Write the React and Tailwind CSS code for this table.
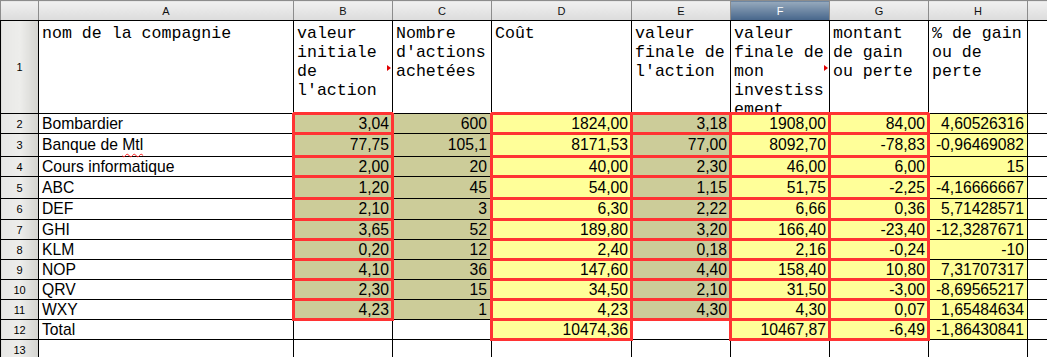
import React from "react";

const letters = ["A", "B", "C", "D", "E", "F", "G", "H", ""];

const heads = [
  "nom de la compagnie",
  "valeur initiale de l'action",
  "Nombre d'actions achetées",
  "Coût",
  "valeur finale de l'action",
  "valeur finale de mon investissement",
  "montant de gain ou perte",
  "% de gain ou de perte",
  "",
];

const rows = [
  ["Bombardier", "3,04", "600", "1824,00", "3,18", "1908,00", "84,00", "4,60526316"],
  ["Banque de Mtl", "77,75", "105,1", "8171,53", "77,00", "8092,70", "-78,83", "-0,96469082"],
  ["Cours informatique", "2,00", "20", "40,00", "2,30", "46,00", "6,00", "15"],
  ["ABC", "1,20", "45", "54,00", "1,15", "51,75", "-2,25", "-4,16666667"],
  ["DEF", "2,10", "3", "6,30", "2,22", "6,66", "0,36", "5,71428571"],
  ["GHI", "3,65", "52", "189,80", "3,20", "166,40", "-23,40", "-12,3287671"],
  ["KLM", "0,20", "12", "2,40", "0,18", "2,16", "-0,24", "-10"],
  ["NOP", "4,10", "36", "147,60", "4,40", "158,40", "10,80", "7,31707317"],
  ["QRV", "2,30", "15", "34,50", "2,10", "31,50", "-3,00", "-8,69565217"],
  ["WXY", "4,23", "1", "4,23", "4,30", "4,30", "0,07", "1,65484634"],
  ["Total", "", "", "10474,36", "", "10467,87", "-6,49", "-1,86430841"],
];

const heights = [
  "h-[20px]", "h-[23px]", "h-[20px]", "h-[22px]", "h-[21px]", "h-[20px]",
  "h-[20px]", "h-[20px]", "h-[20px]", "h-[20px]", "h-[20px]",
];

const widths = [
  "w-[255px]", "w-[99px]", "w-[99px]", "w-[140px]", "w-[99px]",
  "w-[99px]", "w-[99px]", "w-[99px]", "w-[100px]",
];

// which cells get the thick red outline
const isRed = (c, r) => {
  if (c === 1 || c === 4) return r <= 9;
  return c === 3 || c === 5 || c === 6;
};

const fill = (c, r) => {
  if ((c === 1 || c === 2 || c === 4) && r <= 9) return "bg-[#cccc99]";
  if (c === 3 || c === 5 || c === 6 || c === 7) return "bg-[#ffff99]";
  return "bg-white";
};

function Triangle() {
  return (
    <span className="absolute z-10 right-[1px] top-[44px] w-0 h-0 border-y-[3px] border-y-transparent border-l-[4px] border-l-[#e00000]" />
  );
}

function DataCell({ c, r, value }) {
  const border = isRed(c, r)
    ? "border-[3px] border-solid border-[#ff3333] pr-[2px]"
    : "border border-solid border-black pr-[3px]";
  const align = c === 0 ? "text-left pl-[3px]" : "text-right";
  return (
    <td className={`${border} ${fill(c, r)} ${align} align-middle whitespace-nowrap leading-[14px] p-0`}>
      {value === "Banque de Mtl" ? (
        <>
          Banque de{" "}
          <span className="underline decoration-wavy decoration-[#ff2020] decoration-1 underline-offset-[3px]">Mtl</span>
        </>
      ) : (
        value
      )}
    </td>
  );
}

export default function App() {
  return (
    <div className="w-[1047px] h-[357px] overflow-hidden bg-white">
      <table className="table-fixed border-collapse w-[1127px] font-['Liberation_Sans',Arial,sans-serif] text-[15.7px] text-black">
        <colgroup>
          <col className="w-[38px]" />
          {widths.map((w, i) => (
            <col key={i} className={w} />
          ))}
        </colgroup>
        <tbody>
          {/* column letters */}
          <tr className="h-[20px]">
            <td className="border border-solid border-[#8c8c8c] border-b-black bg-linear-to-b from-[#f0f0f0] to-[#dcdcdc]" />
            {letters.map((l, i) =>
              l === "F" ? (
                <td
                  key={i}
                  className="border border-solid border-[#8c8c8c] border-b-black bg-linear-to-b from-[#97aabd] to-[#46658a] text-white text-center text-[11px] leading-[16px]"
                >
                  {l}
                </td>
              ) : (
                <td
                  key={i}
                  className="border border-solid border-[#8c8c8c] border-b-black bg-linear-to-b from-[#f0f0f0] to-[#dcdcdc] text-[#111] text-center text-[11px] leading-[16px]"
                >
                  {l}
                </td>
              )
            )}
          </tr>

          {/* row 1 titles */}
          <tr className="h-[92px]">
            <td className="border border-solid border-black bg-linear-to-r from-[#e7e7e5] via-[#ededeb] to-[#d4d4d0] text-center text-[11px] align-middle">
              1
            </td>
            {heads.map((h, i) => (
              <td
                key={i}
                className="relative border border-solid border-black bg-white align-top overflow-hidden pl-[3px] pr-[2px] pt-[3px] font-['Liberation_Mono','Courier_New',monospace] text-[16.6px] leading-[19px] break-words"
              >
                <div className="h-[88px] overflow-hidden">{h}</div>
                {(i === 1 || i === 5) && <Triangle />}
              </td>
            ))}
          </tr>

          {rows.map((row, r) => (
            <tr key={r} className={heights[r]}>
              <td className="border border-solid border-black bg-linear-to-r from-[#e7e7e5] via-[#ededeb] to-[#d4d4d0] text-center text-[11px] leading-[14px] align-middle p-0">
                {r + 2}
              </td>
              {row.map((v, c) => (
                <DataCell key={c} c={c} r={r} value={v} />
              ))}
              <td className="border border-solid border-black bg-white p-0" />
            </tr>
          ))}

          <tr className="h-[20px]">
            <td className="border border-solid border-black bg-linear-to-r from-[#e7e7e5] via-[#ededeb] to-[#d4d4d0] text-center text-[11px] leading-[14px] align-middle p-0">
              13
            </td>
            {letters.map((_, i) => (
              <td key={i} className="border border-solid border-black bg-white p-0" />
            ))}
          </tr>
        </tbody>
      </table>
    </div>
  );
}
